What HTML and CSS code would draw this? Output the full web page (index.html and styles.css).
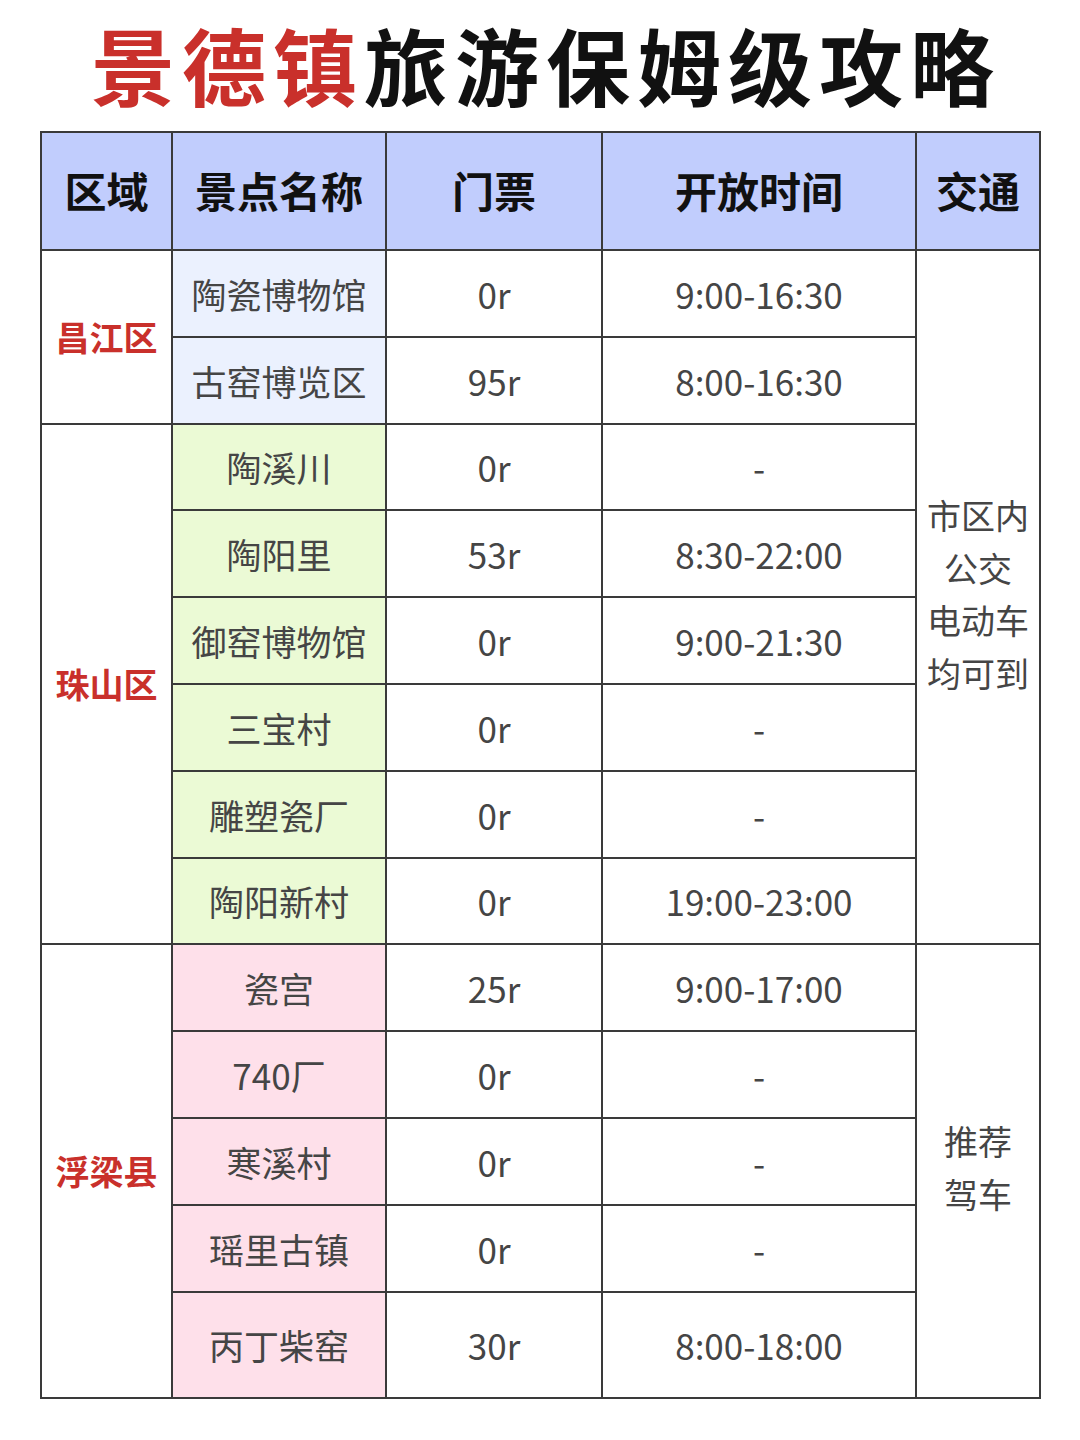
FILE: index.html
```html
<!DOCTYPE html>
<html lang="zh">
<head>
<meta charset="utf-8">
<link rel="stylesheet" href="styles.css">
</head>
<body>
<h1 class="title"><span class="red">景德镇</span>旅游保姆级攻略</h1>
<table class="guide">
  <colgroup>
    <col class="c1"><col class="c2"><col class="c3"><col class="c4"><col class="c5">
  </colgroup>
  <thead>
    <tr class="head"><th>区域</th><th>景点名称</th><th>门票</th><th>开放时间</th><th>交通</th></tr>
  </thead>
  <tbody>
    <tr><td class="area" rowspan="2">昌江区</td><td class="blue">陶瓷博物馆</td><td>0r</td><td>9:00-16:30</td><td class="traffic" rowspan="8">市区内<br>公交<br>电动车<br>均可到</td></tr>
    <tr><td class="blue">古窑博览区</td><td>95r</td><td>8:00-16:30</td></tr>
    <tr><td class="area" rowspan="6">珠山区</td><td class="green">陶溪川</td><td>0r</td><td>-</td></tr>
    <tr><td class="green">陶阳里</td><td>53r</td><td>8:30-22:00</td></tr>
    <tr><td class="green">御窑博物馆</td><td>0r</td><td>9:00-21:30</td></tr>
    <tr><td class="green">三宝村</td><td>0r</td><td>-</td></tr>
    <tr><td class="green">雕塑瓷厂</td><td>0r</td><td>-</td></tr>
    <tr><td class="green">陶阳新村</td><td>0r</td><td>19:00-23:00</td></tr>
    <tr><td class="area" rowspan="5">浮梁县</td><td class="pink">瓷宫</td><td>25r</td><td>9:00-17:00</td><td class="traffic" rowspan="5">推荐<br>驾车</td></tr>
    <tr><td class="pink">740厂</td><td>0r</td><td>-</td></tr>
    <tr><td class="pink">寒溪村</td><td>0r</td><td>-</td></tr>
    <tr><td class="pink">瑶里古镇</td><td>0r</td><td>-</td></tr>
    <tr class="last"><td class="pink">丙丁柴窑</td><td>30r</td><td>8:00-18:00</td></tr>
  </tbody>
</table>
</body>
</html>
```

FILE: styles.css
```css
html, body {
  margin: 0;
  padding: 0;
  background: #ffffff;
}
body {
  width: 1080px;
  font-family: "Noto Sans CJK SC", "Noto Sans", sans-serif;
}
.title {
  margin: 0;
  height: 131px;
  display: flex;
  align-items: center;
  justify-content: center;
  font-size: 84px;
  font-weight: 700;
  letter-spacing: 7px;
  color: #111111;
  padding-left: 12px;
  box-sizing: border-box;
  line-height: 1;
  padding-bottom: 4px;
}
.red {
  color: #c9302b;
}
.guide {
  margin-left: 40px;
  width: 999px;
  border-collapse: collapse;
  table-layout: fixed;
}
.c1 { width: 131px; }
.c2 { width: 214px; }
.c3 { width: 216px; }
.c4 { width: 314px; }
.c5 { width: 124px; }
.guide th, .guide td {
  border: 2px solid #3a3a3a;
  text-align: center;
  vertical-align: middle;
  padding: 0;
}
.head {
  height: 118px;
  background: #c1cdfd;
}
.guide th {
  font-size: 42px;
  font-weight: 700;
  color: #111111;
  padding-bottom: 4px;
}
.guide tbody tr {
  height: 86.8px;
}
.guide tbody tr.last {
  height: 106px;
}
.guide td {
  font-size: 35px;
  color: #454545;
  font-weight: 400;
}
.guide td.area {
  color: #c9302b;
  font-weight: 700;
  font-size: 34px;
}
.guide td.traffic {
  font-size: 34px;
  line-height: 52.5px;
  padding-bottom: 6px;
}
.blue { background: #ebf1fe; }
.green { background: #ebfad5; }
.pink { background: #fee0ea; }
```
